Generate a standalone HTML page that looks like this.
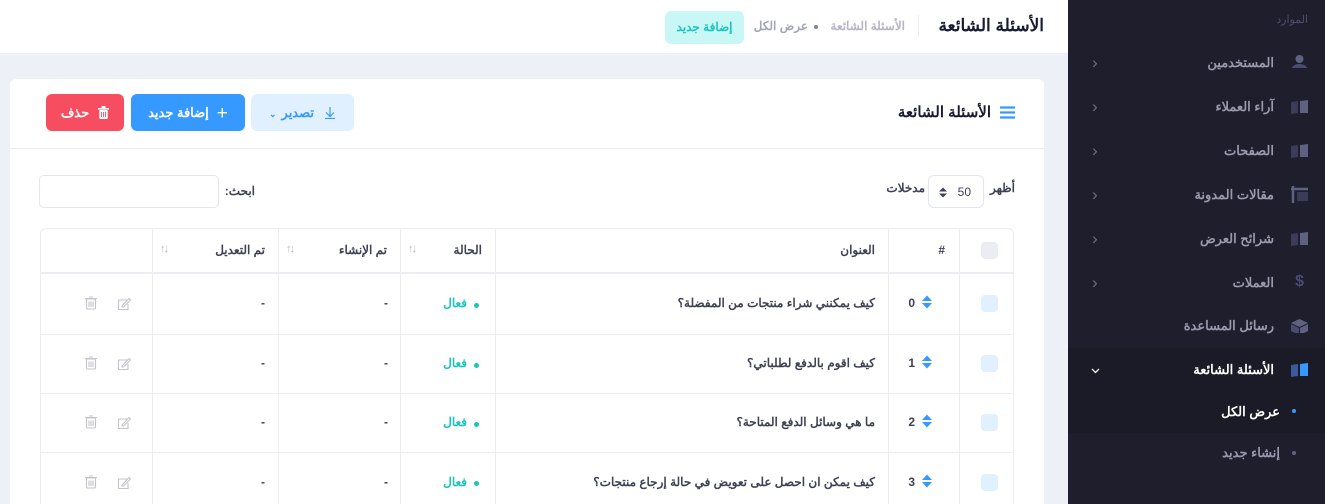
<!DOCTYPE html>
<html dir="rtl" style="overflow:hidden;width:1325px;height:504px"><head><meta charset="utf-8"><style>
*{box-sizing:border-box;margin:0;padding:0}
body{width:1325px;height:504px;overflow:hidden;background:#eef0f7;font-family:"Liberation Sans","Noto Sans CJK SC",sans-serif;position:relative;color:#3f4254}
.a{position:absolute;white-space:nowrap}
.sb{position:absolute;left:1068px;top:0;width:257px;height:504px;background:#1e1e2d}
.si{position:absolute;right:51px;font-size:13px;font-weight:bold;color:#9899ac;line-height:16px}
.ic{position:absolute;right:17px;width:17px;height:14px}
.chev{position:absolute;left:24px;font-size:17px;color:#6c6d80;line-height:16px}
.top{position:absolute;left:0;top:0;width:1068px;height:53px;background:#fff}
.card{position:absolute;left:10px;top:79px;width:1034px;height:425px;background:#fff;border-radius:6px 6px 0 0}
.vl{position:absolute;width:1px;background:#ebedf3}
.hl{position:absolute;height:1px;background:#ebedf3;left:40px;width:974px}
.th{font-size:12px;font-weight:bold;color:#3f4254}
.td{font-size:12px;font-weight:bold;color:#3f4254}
.cb{position:absolute;left:981px;width:17px;height:17px;border-radius:4px;background:#e1f0ff}
.st{font-size:12px;font-weight:bold;color:#1bc5bd}
.dot{position:absolute;width:5px;height:5px;border-radius:50%;background:#1bc5bd}
.srt{font-size:11px;color:#b5b5c3;letter-spacing:-2px}
</style></head><body>

<div class="top">
  <div class="a" style="right:24px;top:16px;font-size:17px;font-weight:bold;color:#181c32">الأسئلة الشائعة</div>
  <div class="a" style="left:918px;top:15px;width:1px;height:22px;background:#ebedf3"></div>
  <div class="a" style="right:163px;top:19px;font-size:12px;font-weight:bold;color:#b5b5c3">الأسئلة الشائعة</div>
  <div class="a" style="left:814px;top:25px;width:4px;height:4px;border-radius:50%;background:#7e8299"></div>
  <div class="a" style="right:260px;top:19px;font-size:12px;font-weight:bold;color:#a1a5b7">عرض الكل</div>
  <div class="a" style="left:665px;top:11px;width:79px;height:33px;border-radius:6px;background:#c9f7f5;color:#1bc5bd;font-size:12px;font-weight:bold;text-align:center;line-height:33px">إضافة جديد</div>
</div>

<div class="card">
  <div class="a" style="right:53px;top:24px;font-size:15px;font-weight:bold;color:#181c32">الأسئلة الشائعة</div>
  <svg class="a" style="left:990px;top:27px" width="15" height="13"><path d="M0 1.5H15M0 6.5H15M0 11.5H15" stroke="#3699ff" stroke-width="2.2"/></svg>
  <div class="a" style="left:241px;top:15px;width:103px;height:37px;border-radius:6px;background:#e1f0ff;color:#3699ff;font-size:13px;font-weight:bold;line-height:37px;text-align:center">
    <svg style="vertical-align:-2px;margin-left:10px" width="12" height="13"><path d="M6 1V10M2 6.5L6 10.5L10 6.5M1 12.5H11" stroke="#3699ff" fill="none" stroke-width="1.2"/></svg>تصدير<span style="font-size:9px;margin-right:5px">&#8964;</span>
  </div>
  <div class="a" style="left:121px;top:15px;width:114px;height:37px;border-radius:6px;background:#3699ff;color:#fff;font-size:13px;font-weight:bold;line-height:37px;text-align:center"><span style="font-size:19px;font-weight:normal;margin-left:8px;vertical-align:-2px">+</span>إضافة جديد</div>
  <div class="a" style="left:36px;top:15px;width:78px;height:37px;border-radius:6px;background:#f64e60;color:#fff;font-size:13px;font-weight:bold;line-height:37px;text-align:center"><svg style="vertical-align:-2px;margin-left:9px" width="11" height="13"><rect x="0" y="2" width="11" height="1.6" fill="#fff"/><rect x="3.5" y="0" width="4" height="2" fill="#fff"/><rect x="1.3" y="4" width="8.4" height="9" fill="#fff" rx="1"/><path d="M3.5 6V11M5.5 6V11M7.5 6V11" stroke="#f64e60" stroke-width="0.9"/></svg>حذف</div>
  <div class="a" style="left:0;top:69px;width:1034px;height:1px;background:#ebedf3"></div>
</div>

<div class="a" style="right:310px;top:181px;font-size:12px;font-weight:bold;color:#3f4254">أظهر</div>
<div class="a" style="left:928px;top:175px;width:56px;height:33px;border:1px solid #e4e6ef;border-radius:6px;font-size:12px;color:#3f4254">
  <span class="a" style="right:12px;top:9px">50</span>
  <svg class="a" style="left:10px;top:11px" width="8" height="11"><path d="M0 4.5L4 0.5L8 4.5ZM0 6.5L4 10.5L8 6.5Z" fill="#3f4254"/></svg>
</div>
<div class="a" style="right:400px;top:181px;font-size:12px;font-weight:bold;color:#3f4254">مدخلات</div>
<div class="a" style="right:1070px;top:184px;font-size:12px;font-weight:bold;color:#3f4254">ابحث:</div>
<div class="a" style="left:39px;top:175px;width:180px;height:33px;border:1px solid #e4e6ef;border-radius:5px;background:#fff"></div>

<!-- table -->
<div class="a" style="left:40px;top:228px;width:974px;height:290px;border:1px solid #ebedf3;border-radius:6px"></div>
<div class="a" style="left:40px;top:272px;width:974px;height:2px;background:#ebedf3"></div>
<div class="hl" style="top:334px"></div>
<div class="hl" style="top:393px"></div>
<div class="hl" style="top:452px"></div>
<div class="vl" style="left:959px;top:228px;height:280px"></div>
<div class="vl" style="left:888px;top:228px;height:280px"></div>
<div class="vl" style="left:495px;top:228px;height:280px"></div>
<div class="vl" style="left:400px;top:228px;height:280px"></div>
<div class="vl" style="left:278px;top:228px;height:280px"></div>
<div class="vl" style="left:152px;top:228px;height:280px"></div>

<div class="cb" style="top:242px;background:#ebedf3"></div>
<div class="a th" style="right:380px;top:243px">#</div>
<div class="a th" style="right:450px;top:243px">العنوان</div>
<div class="a th" style="right:843px;top:243px">الحالة</div>
<div class="a srt" style="left:408px;top:243px">↓↑</div>
<div class="a th" style="right:938px;top:243px">تم الإنشاء</div>
<div class="a srt" style="left:286px;top:243px">↓↑</div>
<div class="a th" style="right:1060px;top:243px">تم التعديل</div>
<div class="a srt" style="left:160px;top:243px">↓↑</div>

<!-- rows -->
<div class="cb" style="top:295px"></div>
<div class="a td" style="right:410px;top:296px">0</div>
<svg class="a" style="left:922px;top:295px" width="10" height="14"><path d="M0 6L5 0.5L10 6ZM0 8L5 13.5L10 8Z" fill="#3699ff"/></svg>
<div class="a td" style="right:450px;top:296px">كيف يمكنني شراء منتجات من المفضلة؟</div>
<div class="dot" style="left:474px;top:303px"></div>
<div class="a st" style="right:858px;top:296px">فعال</div>
<div class="a td" style="left:384px;top:296px">-</div>
<div class="a td" style="left:261px;top:296px">-</div>

<div class="cb" style="top:355px"></div>
<div class="a td" style="right:410px;top:356px">1</div>
<svg class="a" style="left:922px;top:355px" width="10" height="14"><path d="M0 6L5 0.5L10 6ZM0 8L5 13.5L10 8Z" fill="#3699ff"/></svg>
<div class="a td" style="right:450px;top:356px">كيف اقوم بالدفع لطلباتي؟</div>
<div class="dot" style="left:474px;top:363px"></div>
<div class="a st" style="right:858px;top:356px">فعال</div>
<div class="a td" style="left:384px;top:356px">-</div>
<div class="a td" style="left:261px;top:356px">-</div>

<div class="cb" style="top:414px"></div>
<div class="a td" style="right:410px;top:415px">2</div>
<svg class="a" style="left:922px;top:414px" width="10" height="14"><path d="M0 6L5 0.5L10 6ZM0 8L5 13.5L10 8Z" fill="#3699ff"/></svg>
<div class="a td" style="right:450px;top:415px">ما هي وسائل الدفع المتاحة؟</div>
<div class="dot" style="left:474px;top:422px"></div>
<div class="a st" style="right:858px;top:415px">فعال</div>
<div class="a td" style="left:384px;top:415px">-</div>
<div class="a td" style="left:261px;top:415px">-</div>

<div class="cb" style="top:474px"></div>
<div class="a td" style="right:410px;top:475px">3</div>
<svg class="a" style="left:922px;top:474px" width="10" height="14"><path d="M0 6L5 0.5L10 6ZM0 8L5 13.5L10 8Z" fill="#3699ff"/></svg>
<div class="a td" style="right:450px;top:475px">كيف يمكن ان احصل على تعويض في حالة إرجاع منتجات؟</div>
<div class="dot" style="left:474px;top:481px"></div>
<div class="a st" style="right:858px;top:475px">فعال</div>
<div class="a td" style="left:384px;top:475px">-</div>
<div class="a td" style="left:261px;top:475px">-</div>

<!-- action icons -->
<svg class="a" style="left:85px;top:296px" width="50" height="200">
  <g id="r" fill="none" stroke="#c4c4cc" stroke-width="1.1">
    <rect x="1.5" y="3" width="9" height="10" rx="1"/><path d="M0 2.5H12M4 1H8M4 5.5V11M6 5.5V11M8 5.5V11"/>
    <path d="M42 4H33.5V13.5H43V8"/><path d="M37 10L44 2.5L45.5 4L38.5 11H37Z"/>
  </g>
  <use href="#r" y="60"/><use href="#r" y="119"/><use href="#r" y="179"/>
</svg>

<!-- sidebar -->
<div class="sb">
  <div class="a" style="right:17px;top:13px;font-size:11px;color:#4c4e6f">الموارد</div>
  <div class="a" style="left:0;top:348px;width:257px;height:44px;background:#1b1b28"></div>
  <div class="a" style="left:0;top:392px;width:257px;height:41px;background:#1b1b28"></div>

  <div class="si" style="top:55px">المستخدمين</div>
  <svg class="ic" style="top:54px" width="17" height="18"><circle cx="8.5" cy="5" r="4" fill="#5e6280"/><path d="M0 18C0 12 4 10 8.5 10S17 12 17 18Z" fill="#494b74"/></svg>
  <div class="chev" style="top:55px">&lsaquo;</div>

  <div class="si" style="top:99px">آراء العملاء</div>
  <svg class="ic" style="top:100px"><path d="M0 2L7 1V13L0 14Z" fill="#3a3c58"/><path d="M9 1L17 0V13L9 13Z" fill="#5e6280"/></svg>
  <div class="chev" style="top:99px">&lsaquo;</div>

  <div class="si" style="top:143px">الصفحات</div>
  <svg class="ic" style="top:144px"><path d="M0 2L7 1V13L0 14Z" fill="#3a3c58"/><path d="M9 1L17 0V13L9 13Z" fill="#5e6280"/></svg>
  <div class="chev" style="top:143px">&lsaquo;</div>

  <div class="si" style="top:187px">مقالات المدونة</div>
  <svg class="ic" style="top:186px;height:17px" width="19"><path d="M2 0V17M0 3H19" stroke="#5e6280" stroke-width="2.5"/><rect x="6" y="6" width="13" height="9" fill="#3a3c58"/></svg>
  <div class="chev" style="top:187px">&lsaquo;</div>

  <div class="si" style="top:231px">شرائح العرض</div>
  <svg class="ic" style="top:232px"><path d="M0 2L7 1V13L0 14Z" fill="#3a3c58"/><path d="M9 1L17 0V13L9 13Z" fill="#5e6280"/></svg>
  <div class="chev" style="top:231px">&lsaquo;</div>

  <div class="si" style="top:275px">العملات</div>
  <div class="a" style="right:21px;top:273px;font-size:16px;font-weight:bold;color:#494b74">$</div>
  <div class="chev" style="top:275px">&lsaquo;</div>

  <div class="si" style="top:318px">رسائل المساعدة</div>
  <svg class="ic" style="top:319px" height="16"><path d="M8.5 0L17 4L8.5 8L0 4Z" fill="#5e6280"/><path d="M0 5L8 9V16L0 12Z" fill="#494b74"/><path d="M9 9L17 5V12L9 16Z" fill="#5e6280"/></svg>

  <div class="si" style="top:362px;color:#fff">الأسئلة الشائعة</div>
  <svg class="ic" style="top:363px"><path d="M0 2L7 1V13L0 14Z" fill="#3a5a9a"/><path d="M9 1L17 0V13L9 13Z" fill="#3699ff"/></svg>
  <svg class="a" style="left:23px;top:368px" width="9" height="6"><path d="M1 1L4.5 4.5L8 1" stroke="#fff" fill="none" stroke-width="1.3"/></svg>

  <div class="a" style="right:29px;top:409px;width:4px;height:4px;border-radius:50%;background:#3699ff"></div>
  <div class="a" style="right:45px;top:404px;font-size:13px;font-weight:bold;color:#fff">عرض الكل</div>
  <div class="a" style="right:29px;top:451px;width:4px;height:4px;border-radius:50%;background:#5e6280"></div>
  <div class="a" style="right:45px;top:445px;font-size:13px;font-weight:bold;color:#9899ac">إنشاء جديد</div>
</div>
</body></html>
